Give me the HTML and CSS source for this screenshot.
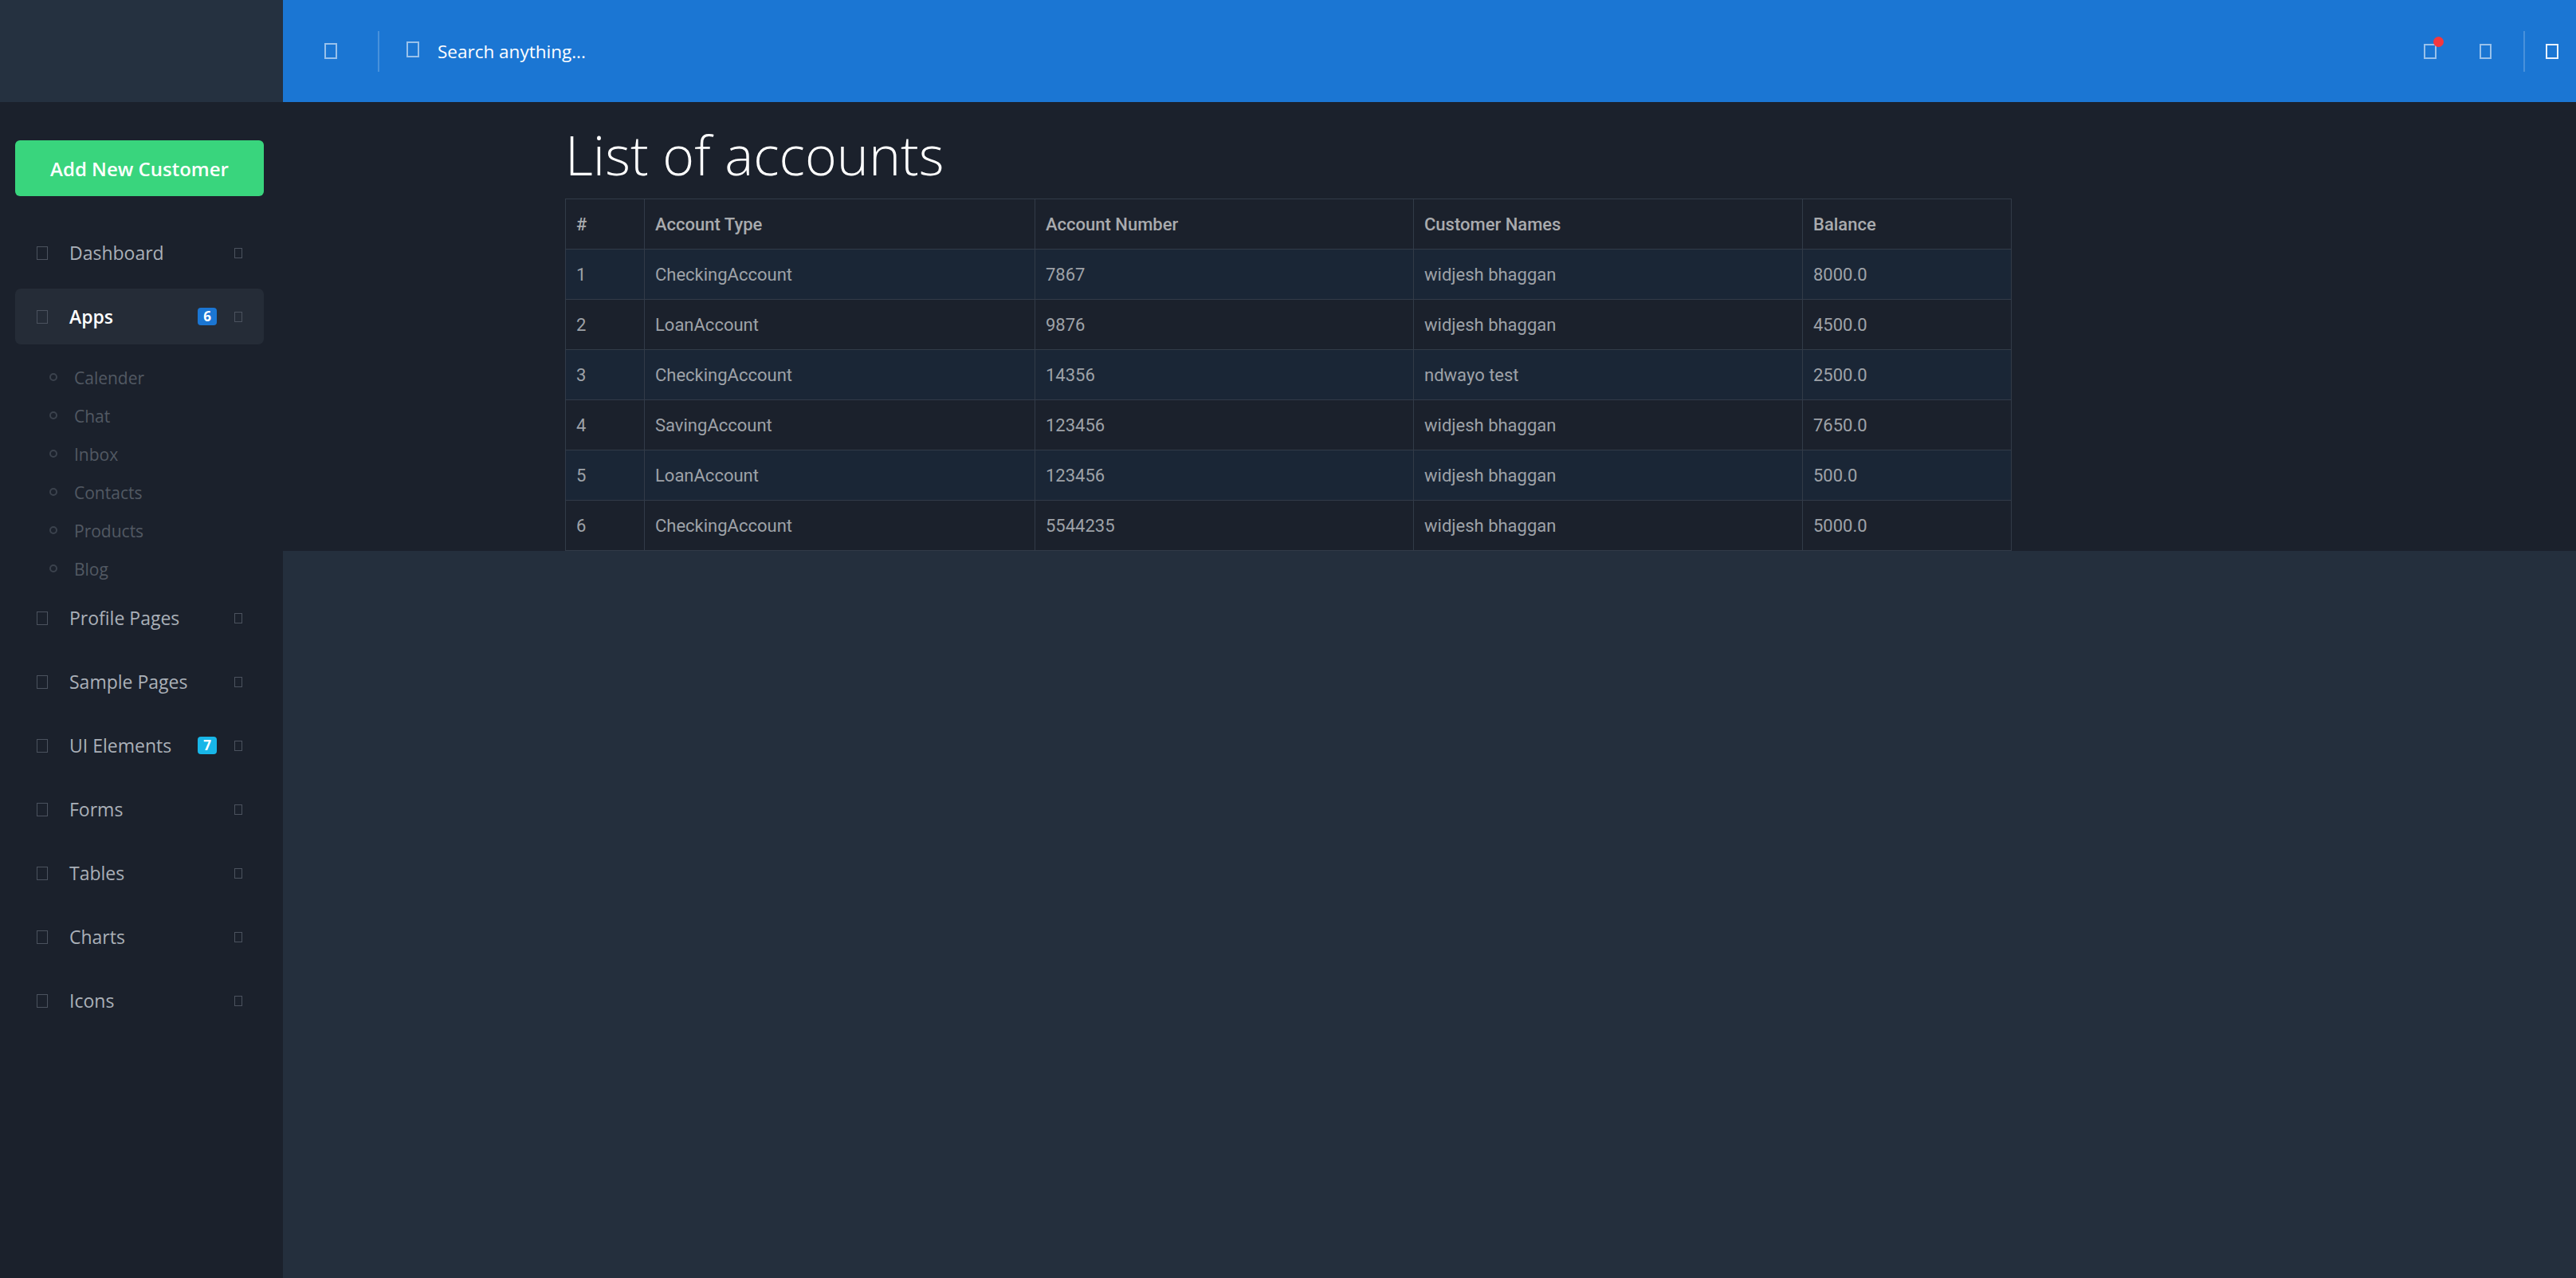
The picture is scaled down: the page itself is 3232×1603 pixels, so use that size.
FILE: index.html
```html
<!DOCTYPE html>
<html lang="en">
<head>
<meta charset="utf-8">
<title>List of accounts</title>
<link rel="stylesheet" href="styles.css">
</head>
<body>
<div class="layout">
  <div class="brand"></div>
  <header class="topbar">
    <span class="tofu tofu-menu"></span>
    <span class="vdivider divider-left"></span>
    <span class="tofu tofu-search"></span>
    <span class="search-text">Search anything...</span>
    <div class="topbar-right">
      <span class="bell"><span class="tofu tofu-bell"></span><span class="dot"></span></span>
      <span class="tofu tofu-msg"></span>
      <span class="vdivider divider-right"></span>
      <span class="tofu tofu-user"></span>
    </div>
  </header>
  <aside class="sidebar">
    <button class="add-btn">Add New Customer</button>
    <ul class="menu">
      <li class="item"><span class="ico"></span><span class="label">Dashboard</span><span class="arrow"></span></li>
      <li class="item active"><span class="ico"></span><span class="label">Apps</span><span class="badge badge-blue">6</span><span class="arrow"></span></li>
      <li class="submenu">
        <div class="sub"><span class="ring"></span>Calender</div>
        <div class="sub"><span class="ring"></span>Chat</div>
        <div class="sub"><span class="ring"></span>Inbox</div>
        <div class="sub"><span class="ring"></span>Contacts</div>
        <div class="sub"><span class="ring"></span>Products</div>
        <div class="sub"><span class="ring"></span>Blog</div>
      </li>
      <li class="item"><span class="ico"></span><span class="label">Profile Pages</span><span class="arrow"></span></li>
      <li class="item"><span class="ico"></span><span class="label">Sample Pages</span><span class="arrow"></span></li>
      <li class="item"><span class="ico"></span><span class="label">UI Elements</span><span class="badge badge-cyan">7</span><span class="arrow"></span></li>
      <li class="item"><span class="ico"></span><span class="label">Forms</span><span class="arrow"></span></li>
      <li class="item"><span class="ico"></span><span class="label">Tables</span><span class="arrow"></span></li>
      <li class="item"><span class="ico"></span><span class="label">Charts</span><span class="arrow"></span></li>
      <li class="item"><span class="ico"></span><span class="label">Icons</span><span class="arrow"></span></li>
    </ul>
  </aside>
  <main class="main">
    <section class="content">
      <h1 class="title">List of accounts</h1>
      <table class="accounts">
        <colgroup>
          <col class="c1"><col class="c2"><col class="c3"><col class="c4"><col class="c5">
        </colgroup>
        <thead>
          <tr><th>#</th><th>Account Type</th><th>Account Number</th><th>Customer Names</th><th>Balance</th></tr>
        </thead>
        <tbody>
          <tr><td>1</td><td>CheckingAccount</td><td>7867</td><td>widjesh bhaggan</td><td>8000.0</td></tr>
          <tr><td>2</td><td>LoanAccount</td><td>9876</td><td>widjesh bhaggan</td><td>4500.0</td></tr>
          <tr><td>3</td><td>CheckingAccount</td><td>14356</td><td>ndwayo test</td><td>2500.0</td></tr>
          <tr><td>4</td><td>SavingAccount</td><td>123456</td><td>widjesh bhaggan</td><td>7650.0</td></tr>
          <tr><td>5</td><td>LoanAccount</td><td>123456</td><td>widjesh bhaggan</td><td>500.0</td></tr>
          <tr><td>6</td><td>CheckingAccount</td><td>5544235</td><td>widjesh bhaggan</td><td>5000.0</td></tr>
        </tbody>
      </table>
    </section>
  </main>
</div>
</body>
</html>
```

FILE: styles.css
```css
* { box-sizing: border-box; }
html, body { margin: 0; padding: 0; }
body {
  background: #242f3d;
  font-family: "Open Sans", "Noto Sans", sans-serif;
  overflow: hidden;
}
.layout {
  display: grid;
  grid-template-columns: 355px 1fr;
  grid-template-rows: 128px 1475px;
  width: 3232px;
  height: 1603px;
}
.brand { background: #253140; }
.topbar {
  background: #1b76d3;
  display: flex;
  align-items: center;
  padding: 0 22px 0 52px;
}
.tofu {
  display: inline-block;
  width: 16px;
  height: 20px;
  border: 2px solid rgba(255,255,255,0.55);
}
.vdivider {
  display: inline-block;
  width: 2px;
  height: 51px;
  background: rgba(255,255,255,0.2);
}
.divider-left { margin: 0 34px 0 51px; }
.tofu-search { margin-top: -4px; }
.search-text {
  margin-left: 23px;
  color: #fff;
  font-size: 22.5px;
  font-weight: 500;
}
.topbar-right {
  margin-left: auto;
  display: flex;
  align-items: center;
}
.bell { position: relative; display: inline-flex; }
.tofu-bell { height: 19px; }
.dot {
  position: absolute;
  left: 12px;
  top: -9px;
  width: 13px;
  height: 13px;
  border-radius: 50%;
  background: #f5373d;
}
.tofu-msg { margin-left: 54px; width: 15px; height: 19px; }
.divider-right { margin: 0 26px 0 40px; }
.tofu-user { border-color: rgba(255,255,255,0.9); height: 19px; }

.sidebar {
  background: #1b212c;
  padding: 48px 24px 0 19px;
}
.add-btn {
  display: block;
  width: 312px;
  height: 70px;
  border: 0;
  border-radius: 6px;
  background: #39d57d;
  color: #fff;
  font-family: "Open Sans", "Noto Sans", sans-serif;
  font-size: 24px;
  font-weight: 600;
}
.menu {
  list-style: none;
  display: flex;
  flex-direction: column;
  margin: 31px 0 0;
  padding: 0;
}
.item {
  display: flex;
  align-items: center;
  height: 70px;
  margin: 5px 0;
  padding: 0 27px;
  border-radius: 7px;
  color: #aab0b8;
  font-size: 23px;
  font-weight: 500;
}
.item.active {
  background: #252c37;
  color: #fff;
  font-weight: 600;
}
.ico {
  flex: none;
  width: 14px;
  height: 17px;
  border: 1.5px solid #4b525e;
  margin-right: 27px;
}
.label { flex: 1; }
.badge {
  flex: none;
  width: 24px;
  height: 22px;
  border-radius: 4px;
  color: #fff;
  font-family: "Open Sans", sans-serif;
  font-size: 17px;
  font-weight: 700;
  line-height: 22px;
  text-align: center;
  margin-right: 22px;
}
.badge-blue { background: #1b76d3; }
.badge-cyan { background: #18b6e8; }
.arrow {
  flex: none;
  width: 10px;
  height: 13px;
  border: 1.5px solid #4b525e;
}
.submenu { padding: 10px 0 0; }
.sub {
  display: flex;
  align-items: center;
  height: 48px;
  padding: 5px 0 0 43px;
  color: #525963;
  font-size: 21px;
  font-weight: 500;
}
.ring {
  flex: none;
  width: 10px;
  height: 10px;
  border: 2.5px solid #3b424d;
  border-radius: 50%;
  margin-right: 21px;
  margin-top: -1px;
}

.main { background: #242f3d; }
.content {
  background: #1b212c;
  padding: 26px 0 0 354px;
}
.title {
  margin: 0 0 15px;
  color: #fff;
  font-size: 68px;
  font-weight: 300;
  line-height: 80px;
}
.accounts {
  width: 1814px;
  table-layout: fixed;
  border-collapse: collapse;
  font-family: Roboto, "Liberation Sans", sans-serif;
  font-size: 22px;
}
.c1 { width: 99px; }
.c2 { width: 490px; }
.c3 { width: 475px; }
.c4 { width: 488px; }
.c5 { width: 262px; }
.accounts th, .accounts td {
  border: 1px solid #323b48;
  height: 63px;
  padding: 0 13px;
  text-align: left;
  vertical-align: middle;
}
.accounts th {
  color: #a9abae;
  font-weight: 500;
}
.accounts td { color: #9ea2a8; }
.accounts tbody tr:nth-child(odd) { background: #1a2636; }
```
